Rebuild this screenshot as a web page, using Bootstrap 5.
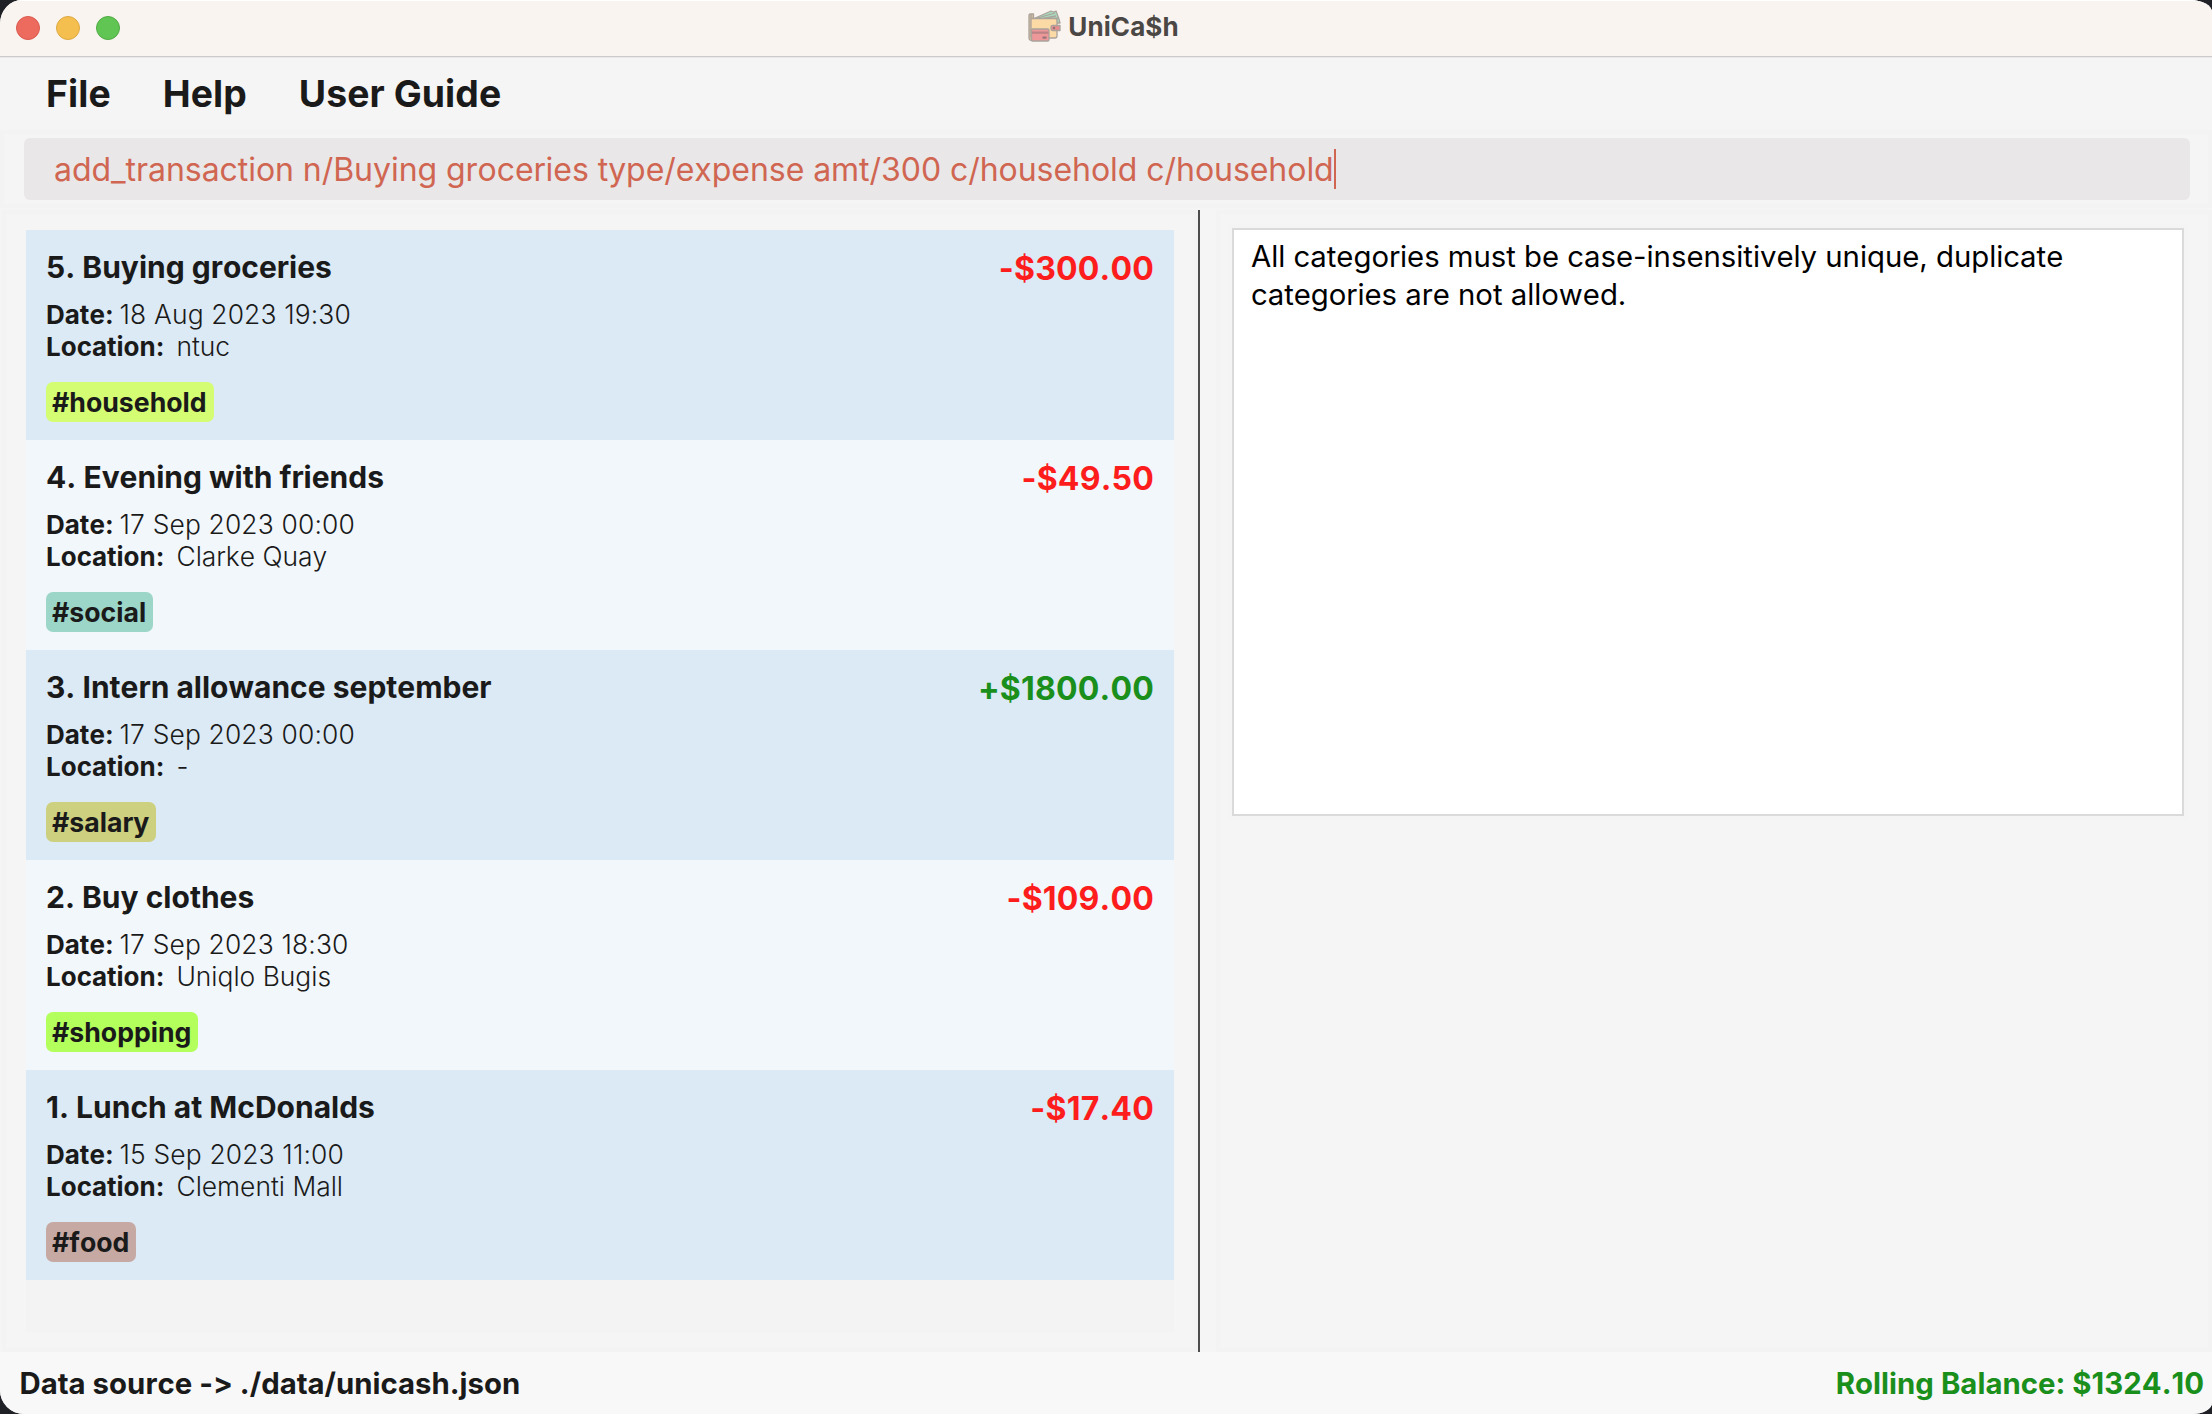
<!DOCTYPE html>
<html lang="en">
<head>
<meta charset="utf-8">
<meta name="viewport" content="width=device-width, initial-scale=1">
<title>UniCa$h</title>
<link href="https://cdn.jsdelivr.net/npm/bootstrap@5.3.0/dist/css/bootstrap.min.css" rel="stylesheet">
<style>
  html, body { height: 100%; }
  body { background: #1f2126; font-family: Inter, "Liberation Sans", sans-serif; color: #1a1a1a; font-kerning: none; font-feature-settings: "calt" 0; }
  .app-window { background: #f5f5f5; border-radius: 22px 22px 20px 24px / 24px 12px 11px 24px; }

  .title-bar { height: 58px; background: #faf4f1; border-bottom: 1px solid #ebe9e9; box-shadow: inset 0 -1px #cdcaca, inset 0 1px #fff; padding: 0 16px 2px; }
  .light { width: 24px; height: 24px; border: 1px solid; }
  .light-close { background: #ed6a5e; border-color: #d95a4f; }
  .light-min { background: #f5bf4f; border-color: #dca843; }
  .light-zoom { background: #61c554; border-color: #50ab44; }
  .app-icon { margin: -3px 6px 0 0; }
  .app-title { font-size: 26px; font-weight: 700; color: #4b4744; line-height: 32px; padding: 0 5px 2px 0; letter-spacing: .1px; }

  .menu-strip { height: 72px; padding: 0 46px; gap: 52px; font-size: 37.33px; font-weight: 700; line-height: 44px; letter-spacing: .08px; }
  .menu-strip a { color: #1a1a1a; }

  .soft-frame { border: 4px solid #f3f3f3; }
  .command-panel { height: 78px; padding: 4px 18px 4px 20px; margin-bottom: 2px; }
  .command-field { height: 62px; border-radius: 6px; background: #e9e7e8; color: #d06651; font-size: 32px; letter-spacing: -.045px; padding: 1px 30px 0; line-height: 40px; }
  .caret { width: 2px; height: 40px; background: #d06651; margin-bottom: 1px; }

  .list-pane { width: 1196px; margin-left: 2px; padding: 16px 20px; }
  .transactions { background: #f3f3f3; border-radius: 0; }
  .entry { height: 210px; padding: 15px 20px 0; border: 0; background: #f2f7fb; color: inherit; }
  .entry:nth-child(odd) { background: #dceaf5; }
  .entry-head { height: 44px; }
  .entry-name { font-size: 30px; font-weight: 700; line-height: 44px; }
  .entry-amount { font-size: 32px; font-weight: 700; line-height: 48px; letter-spacing: .2px; }
  .loss { color: #fc1d1c; }
  .gain { color: #1a8f1c; }
  .entry-meta { height: 32px; font-size: 26.4px; line-height: 32px; font-weight: 300; }
  .entry-meta b { font-size: 26px; font-weight: 700; }
  .meta-block { margin-top: 9px; }
  .date-value { margin-left: 6px; letter-spacing: .16px; }
  .place-value { margin-left: 12px; }
  .tag { margin-top: 20px; height: 40px; border-radius: 7px; padding: 1px 7px 0 6px; font-size: 26.67px; font-weight: 700; line-height: 39px; }
  .tag-household { background: #d4fd73; }
  .tag-social { background: #9bd6c9; }
  .tag-salary { background: #cdd07f; }
  .tag-shopping { background: #b3ff5c; }
  .tag-food { background: #c6a9a3; }

  .splitter { width: 2px; background: #4d4d4d; }
  .result-pane { margin-left: 16px; padding: 10px 20px 0 8px; }
  .result-frame { border: 4px solid #f4f4f4; }
  .result-box { height: 588px; border: 2px solid #dadada; background: #fff; color: #000; font-size: 29.33px; line-height: 38px; letter-spacing: -.02px; padding: 8px 17px; }

  .status-strip { height: 62px; background: #f8f8f8; padding: 2px 8px 0 19.5px; font-size: 29.33px; font-weight: 700; letter-spacing: .04px; }
</style>
</head>
<body>
<div class="app-window d-flex flex-column vh-100 overflow-hidden">
  <header class="title-bar row g-0 align-items-center flex-shrink-0">
    <div class="col d-flex gap-3">
      <span class="light light-close rounded-circle"></span>
      <span class="light light-min rounded-circle"></span>
      <span class="light light-zoom rounded-circle"></span>
    </div>
    <div class="col-auto d-flex align-items-center">
      <svg width="34" height="34" viewBox="0 0 34 34" class="app-icon" aria-hidden="true">
        <g stroke="#aaa39c" stroke-width="1.3" stroke-linejoin="round">
          <path d="M5 10 23 2l3 1 2-1 3 8 1 4H5z" fill="#a8d9bc"/>
          <path d="M8 9.500 27 4M13 10l15-3M20 11l10-2" fill="none"/>
          <path d="M1 6.500Q1 4.500 3.500 5h2v26.500h-2Q1 31.500 1 29z" fill="#d9bd98"/>
          <path d="M3 5.500V9.500h24q2 0 2 2v15.500q0 2-2 2H5q-2 0-2-2z" fill="#fbdaa6"/>
          <path d="M23 18q0-1.500 1.500-1.500H32v5h-7.500Q23 21.500 23 20z" fill="#e98b8c"/>
          <rect x="3.500" y="20" width="17.500" height="12" rx="1.200" fill="#ed9799"/>
        </g>
        <path d="M4 22.500h16.500v2.300H4z" fill="#bb8386"/>
        <path d="M14.500 27.500h4v2.200h-4z" fill="#94757a"/>
        <circle cx="26" cy="19" r="1.200" fill="#8d7376"/>
      </svg>
      <span class="app-title">UniCa$h</span>
    </div>
    <div class="col"></div>
  </header>

  <nav class="menu-strip d-flex align-items-center flex-shrink-0">
    <a class="text-decoration-none" href="#">File</a>
    <a class="text-decoration-none" href="#">Help</a>
    <a class="text-decoration-none" href="#">User Guide</a>
  </nav>

  <section class="command-panel soft-frame flex-shrink-0">
    <div class="command-field d-flex align-items-center">
      <span>add_transaction n/Buying groceries type/expense amt/300 c/household c/household</span><span class="caret"></span>
    </div>
  </section>

  <main class="d-flex flex-grow-1">
    <section class="list-pane soft-frame flex-shrink-0">
      <div class="transactions list-group h-100">
        <article class="entry list-group-item">
          <div class="entry-head d-flex justify-content-between align-items-start">
            <span class="entry-name">5. Buying groceries</span><span class="entry-amount loss">-$300.00</span>
          </div>
          <div class="meta-block">
            <div class="entry-meta d-flex align-items-baseline"><b>Date:</b><span class="date-value">18 Aug 2023 19:30</span></div>
            <div class="entry-meta d-flex align-items-baseline"><b>Location:</b><span class="place-value">ntuc</span></div>
          </div>
          <div class="d-flex"><span class="tag tag-household">#household</span></div>
        </article>
        <article class="entry list-group-item">
          <div class="entry-head d-flex justify-content-between align-items-start">
            <span class="entry-name">4. Evening with friends</span><span class="entry-amount loss">-$49.50</span>
          </div>
          <div class="meta-block">
            <div class="entry-meta d-flex align-items-baseline"><b>Date:</b><span class="date-value">17 Sep 2023 00:00</span></div>
            <div class="entry-meta d-flex align-items-baseline"><b>Location:</b><span class="place-value">Clarke Quay</span></div>
          </div>
          <div class="d-flex"><span class="tag tag-social">#social</span></div>
        </article>
        <article class="entry list-group-item">
          <div class="entry-head d-flex justify-content-between align-items-start">
            <span class="entry-name">3. Intern allowance september</span><span class="entry-amount gain">+$1800.00</span>
          </div>
          <div class="meta-block">
            <div class="entry-meta d-flex align-items-baseline"><b>Date:</b><span class="date-value">17 Sep 2023 00:00</span></div>
            <div class="entry-meta d-flex align-items-baseline"><b>Location:</b><span class="place-value">-</span></div>
          </div>
          <div class="d-flex"><span class="tag tag-salary">#salary</span></div>
        </article>
        <article class="entry list-group-item">
          <div class="entry-head d-flex justify-content-between align-items-start">
            <span class="entry-name">2. Buy clothes</span><span class="entry-amount loss">-$109.00</span>
          </div>
          <div class="meta-block">
            <div class="entry-meta d-flex align-items-baseline"><b>Date:</b><span class="date-value">17 Sep 2023 18:30</span></div>
            <div class="entry-meta d-flex align-items-baseline"><b>Location:</b><span class="place-value">Uniqlo Bugis</span></div>
          </div>
          <div class="d-flex"><span class="tag tag-shopping">#shopping</span></div>
        </article>
        <article class="entry list-group-item">
          <div class="entry-head d-flex justify-content-between align-items-start">
            <span class="entry-name">1. Lunch at McDonalds</span><span class="entry-amount loss">-$17.40</span>
          </div>
          <div class="meta-block">
            <div class="entry-meta d-flex align-items-baseline"><b>Date:</b><span class="date-value">15 Sep 2023 11:00</span></div>
            <div class="entry-meta d-flex align-items-baseline"><b>Location:</b><span class="place-value">Clementi Mall</span></div>
          </div>
          <div class="d-flex"><span class="tag tag-food">#food</span></div>
        </article>
      </div>
    </section>
    <div class="splitter flex-shrink-0"></div>
    <section class="result-pane soft-frame flex-grow-1">
      <div class="result-frame">
        <div class="result-box">All categories must be case-insensitively unique, duplicate categories are not allowed.</div>
      </div>
    </section>
  </main>

  <footer class="status-strip d-flex align-items-center justify-content-between flex-shrink-0">
    <span>Data source -&gt; ./data/unicash.json</span>
    <span class="gain">Rolling Balance: $1324.10</span>
  </footer>
</div>
<script src="https://cdn.jsdelivr.net/npm/bootstrap@5.3.0/dist/js/bootstrap.bundle.min.js"></script>
</body>
</html>
